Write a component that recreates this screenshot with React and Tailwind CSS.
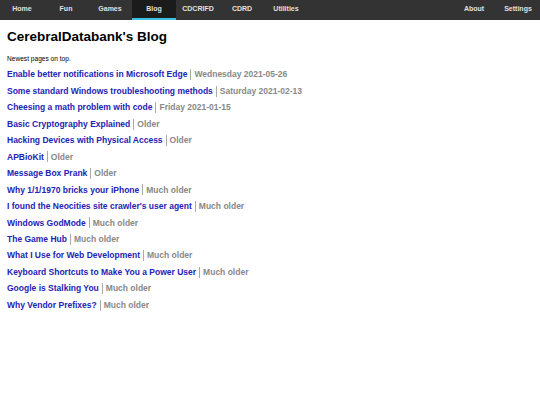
import React from 'react';

const NAV_LEFT = ['Home', 'Fun', 'Games', 'Blog', 'CDCRIFD', 'CDRD', 'Utilities'];
const NAV_RIGHT = ['About', 'Settings'];

const posts = [
  { title: 'Enable better notifications in Microsoft Edge', date: 'Wednesday 2021-05-26' },
  { title: 'Some standard Windows troubleshooting methods', date: 'Saturday 2021-02-13' },
  { title: 'Cheesing a math problem with code', date: 'Friday 2021-01-15' },
  { title: 'Basic Cryptography Explained', date: 'Older' },
  { title: 'Hacking Devices with Physical Access', date: 'Older' },
  { title: 'APBioKit', date: 'Older' },
  { title: 'Message Box Prank', date: 'Older' },
  { title: 'Why 1/1/1970 bricks your iPhone', date: 'Much older' },
  { title: "I found the Neocities site crawler's user agent", date: 'Much older' },
  { title: 'Windows GodMode', date: 'Much older' },
  { title: 'The Game Hub', date: 'Much older' },
  { title: 'What I Use for Web Development', date: 'Much older' },
  { title: 'Keyboard Shortcuts to Make You a Power User', date: 'Much older' },
  { title: 'Google is Stalking You', date: 'Much older' },
  { title: 'Why Vendor Prefixes?', date: 'Much older' },
];

const NavItem = ({ label }) => {
  const active = label === 'Blog';
  return (
    <a
      href="#"
      className={`w-[44px] h-full flex items-center justify-center text-[7px] font-bold text-[#e0e0e0] border-b-2 ${active ? 'bg-[#1b1b1b] border-[#3cc0e0]' : 'border-transparent'}`}
    >
      {label}
    </a>
  );
};

export default function App() {
  return (
    <div className="w-[540px] min-h-[405px] bg-white font-['Liberation_Sans',Arial,sans-serif]">
      {/* nav */}
      <nav className="h-[20px] bg-[#333333] flex justify-between">
        <div className="flex h-full">
          {NAV_LEFT.map(l => <NavItem key={l} label={l} />)}
        </div>
        <div className="flex h-full">
          {NAV_RIGHT.map(l => <NavItem key={l} label={l} />)}
        </div>
      </nav>

      <main className="px-[7px]">
        <h1 className="text-[13.5px] font-bold text-black mt-[9px] leading-[16px]">CerebralDatabank's Blog</h1>
        <p className="text-[6.6px] text-black mt-[10px] leading-[8px]">Newest pages on top.</p>
        <ul className="mt-[3.5px]">
          {posts.map(p => (
            <li key={p.title} className="h-[16.46px] flex items-center text-[8.5px] font-bold leading-none">
              <a href="#" className="text-[#2323b4]">{p.title}</a>
              <span className="ml-[3px] pl-[3px] border-l border-[#aaaaaa] h-[11px] flex items-center text-[#888888]">{p.date}</span>
            </li>
          ))}
        </ul>
      </main>
    </div>
  );
}
